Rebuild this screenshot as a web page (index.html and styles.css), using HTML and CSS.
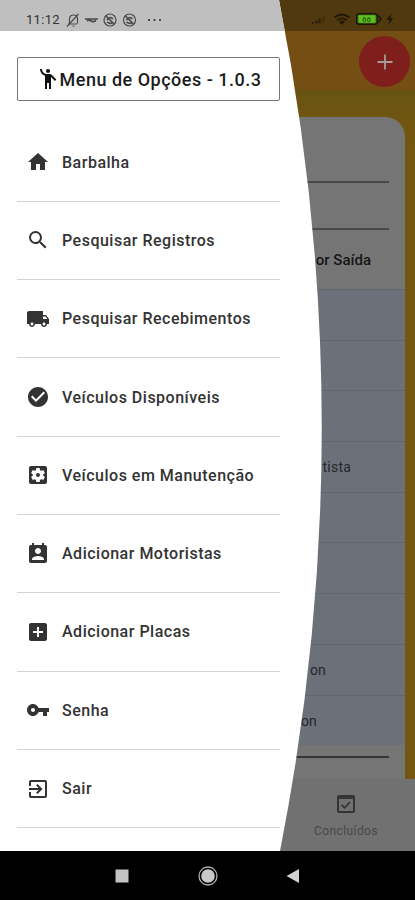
FILE: index.html
```
<!DOCTYPE html>
<html lang="pt-BR">
<head>
    <meta charset="UTF-8">
    <meta name="viewport" content="width=device-width, initial-scale=1.0">
    <title>Menu de Opções</title>
    <link rel="stylesheet" href="styles.css">
</head>
<body>
<div class="phone">
    <div class="app">
        <div class="app-status">
            <svg width="100" height="20" viewBox="0 0 100 20">
                <path d="M3 14.500h2v-1.500H3zM6.500 14.500h2v-3h-2zM9.500 14.500h2V9.500h-2z" fill="#2b1d08"/>
                <path d="M12.500 14.500V7.500l3-2v9z" fill="#46300e"/>
                <g fill="none" stroke="#231806" stroke-width="1.700">
                    <path d="M25.500 8.500q7.500-6 15 0M28 11.300q5-4 10 0"/>
                </g>
                <path d="M30 12.800q3-2.400 6 0l-3 3.200z" fill="#231806"/>
                <rect x="47.700" y="4.700" width="20.500" height="10.600" rx="2.500" fill="#386c14" stroke="#1e1707" stroke-width="1.400"/>
                <rect x="49.500" y="6.300" width="17" height="7.400" rx="1" fill="#61bd20"/>
                <path d="M69 6.500l3 3.500-3 3.500" fill="none" stroke="#1e1707" stroke-width="1.500"/>
                <text x="53" y="13" class="battery-text">66</text>
                <path d="M82.500 4.500l-5 6.300h3l-1 4.700 4.700-6.300h-3z" fill="#1e1707"/>
            </svg>
        </div>
        <div class="app-header">
            <button class="add-btn">
                <svg width="24" height="24" viewBox="0 0 24 24"><path d="M12 4.500v15M4.500 12h15" stroke="#a69a9a" stroke-width="1.800"/></svg>
            </button>
        </div>
        <div class="content">
            <div class="card">
                <div class="field field-first"></div>
                <div class="field"></div>
                <div class="table-head">or Saída</div>
                <div class="table-row"></div>
                <div class="table-row"></div>
                <div class="table-row"></div>
                <div class="table-row name-long">tista</div>
                <div class="table-row"></div>
                <div class="table-row"></div>
                <div class="table-row"></div>
                <div class="table-row name-mid">on</div>
                <div class="table-row name-short">on</div>
                <div class="table-end"></div>
            </div>
        </div>
        <div class="tabs">
            <div class="tab">
                <svg width="24" height="24" viewBox="0 0 24 24" fill="#343434"><path d="M19 3H5c-1.110 0-2 .9-2 2v14c0 1.100.89 2 2 2h14c1.100 0 2-.9 2-2V5c0-1.100-.9-2-2-2zm0 16H5V7h14v12zM10.500 17l-3.500-3.500 1.200-1.200 2.300 2.300 5-5 1.200 1.200z"/></svg>
                <span>Concluídos</span>
            </div>
        </div>
    </div>

    <div class="drawer">
        <div class="drawer-status">
            <span>11:12</span>
            <svg width="100" height="20" viewBox="0 0 100 20" fill="none" stroke="#4b4b4b" stroke-width="1.200">
                <path d="M3 14h9M4.500 13.500V9q0-4 4-4t4 4v4.500M7.500 16h2M2 16.500L13.500 4"/>
                <path d="M20 9h13M22 11q2-1.500 4 0t5-.5" stroke-width="1.700"/>
                <circle cx="45" cy="10" r="6"/>
                <path d="M41 6l8 8M42 10q3-4 6-1M42 12q3 2 5 1" stroke-width="1.700"/>
                <circle cx="64.500" cy="10" r="6"/>
                <path d="M60.500 6l8 8M61.500 10q3-4 6-1M61.500 12q3 2 5 1" stroke-width="1.700"/>
                <path d="M83 10h2M88.500 10h2M94 10h2" stroke-width="2"/>
            </svg>
        </div>
        <div class="menu">
            <div class="menu-title">
                <svg width="24" height="24" viewBox="0 0 24 24" fill="#111"><circle cx="12" cy="4" r="2"/><path d="M15.890 8.110C15.500 7.720 14.830 7 13.530 7h-2.540C8.240 6.990 6 4.750 6 2H4c0 3.160 2.110 5.840 5 6.710V22h2v-6h2v6h2V10.050L18.950 14l1.410-1.410-4.470-4.480z"/></svg>
                <span>Menu de Opções - 1.0.3</span>
            </div>
            <div class="menu-item">
                <svg viewBox="0 0 24 24"><path d="M10 20v-6h4v6h5v-8h3L12 3 2 12h3v8z"/></svg>
                <span>Barbalha</span>
            </div>
            <div class="menu-item">
                <svg viewBox="0 0 24 24"><path d="M15.500 14h-.79l-.28-.27A6.471 6.471 0 0 0 16 9.500 6.500 6.500 0 1 0 9.500 16c1.610 0 3.090-.59 4.230-1.570l.27.28v.79l5 4.990L20.490 19l-4.990-5zm-6 0C7.010 14 5 11.990 5 9.500S7.010 5 9.500 5 14 7.010 14 9.500 11.990 14 9.500 14z"/></svg>
                <span>Pesquisar Registros</span>
            </div>
            <div class="menu-item">
                <svg viewBox="0 0 24 24"><path d="M20 8h-3V4H3c-1.100 0-2 .9-2 2v11h2c0 1.660 1.340 3 3 3s3-1.340 3-3h6c0 1.660 1.340 3 3 3s3-1.340 3-3h2v-5l-3-4zM6 18.500c-.83 0-1.500-.67-1.500-1.500s.67-1.500 1.500-1.500 1.500.67 1.500 1.500-.67 1.500-1.500 1.500zm13.500-9l1.960 2.500H17V9.500h2.500zm-1.500 9c-.83 0-1.500-.67-1.500-1.500s.67-1.500 1.500-1.500 1.500.67 1.500 1.500-.67 1.500-1.500 1.500z"/></svg>
                <span>Pesquisar Recebimentos</span>
            </div>
            <div class="menu-item">
                <svg viewBox="0 0 24 24"><path d="M12 2C6.480 2 2 6.480 2 12s4.480 10 10 10 10-4.480 10-10S17.520 2 12 2zm-2 15l-5-5 1.410-1.410L10 14.170l7.590-7.590L19 8l-9 9z"/></svg>
                <span>Veículos Disponíveis</span>
            </div>
            <div class="menu-item">
                <svg viewBox="0 0 24 24"><path d="M12 10c-1.100 0-2 .9-2 2s.9 2 2 2 2-.9 2-2-.9-2-2-2zm7-7H5c-1.110 0-2 .9-2 2v14c0 1.100.89 2 2 2h14c1.110 0 2-.9 2-2V5c0-1.100-.89-2-2-2zm-1.750 9c0 .23-.02.46-.05.68l1.480 1.160c.13.110.17.3.08.45l-1.400 2.420c-.09.150-.27.210-.43.150l-1.740-.7c-.36.280-.76.510-1.180.69l-.26 1.850c-.03.170-.18.300-.35.300h-2.800c-.17 0-.32-.13-.35-.29l-.26-1.850c-.43-.18-.82-.41-1.180-.69l-1.740.7c-.16.060-.34 0-.43-.15l-1.400-2.420c-.09-.15-.05-.34.080-.45l1.480-1.160c-.03-.23-.05-.46-.05-.69s.02-.46.050-.68l-1.480-1.160c-.13-.11-.17-.3-.08-.45l1.400-2.420c.09-.15.270-.21.430-.15l1.740.7c.36-.28.760-.51 1.180-.69l.26-1.850c.03-.17.180-.3.350-.3h2.800c.17 0 .32.130.35.290l.26 1.850c.43.180.82.410 1.180.69l1.740-.7c.16-.06.340 0 .43.150l1.400 2.420c.09.150.05.340-.08.450l-1.480 1.160c.03.230.05.460.05.690z"/></svg>
                <span>Veículos em Manutenção</span>
            </div>
            <div class="menu-item">
                <svg viewBox="0 0 24 24"><path d="M19 3h-1V1h-2v2H8V1H6v2H5c-1.110 0-2 .9-2 2v14c0 1.100.89 2 2 2h14c1.100 0 2-.9 2-2V5c0-1.100-.9-2-2-2zm-7 3c1.660 0 3 1.340 3 3s-1.340 3-3 3-3-1.340-3-3 1.340-3 3-3zm6 12H6v-1c0-2 4-3.100 6-3.100s6 1.100 6 3.100v1z"/></svg>
                <span>Adicionar Motoristas</span>
            </div>
            <div class="menu-item">
                <svg viewBox="0 0 24 24"><path d="M19 3H5c-1.110 0-2 .9-2 2v14c0 1.100.89 2 2 2h14c1.100 0 2-.9 2-2V5c0-1.100-.9-2-2-2zm-2 10h-4v4h-2v-4H7v-2h4V7h2v4h4v2z"/></svg>
                <span>Adicionar Placas</span>
            </div>
            <div class="menu-item">
                <svg viewBox="0 0 24 24"><path d="M12.650 10C11.830 7.670 9.610 6 7 6c-3.310 0-6 2.690-6 6s2.690 6 6 6c2.610 0 4.830-1.670 5.650-4H17v4h4v-4h2v-4H12.650zM7 14c-1.100 0-2-.9-2-2s.9-2 2-2 2 .9 2 2-.9 2-2 2z"/></svg>
                <span>Senha</span>
            </div>
            <div class="menu-item">
                <svg viewBox="0 0 24 24"><path d="M10.090 15.590L11.500 17l5-5-5-5-1.410 1.410L12.670 11H3v2h9.670l-2.580 2.590zM19 3H5c-1.110 0-2 .9-2 2v4h2V5h14v14H5v-4H3v4c0 1.100.89 2 2 2h14c1.100 0 2-.9 2-2V5c0-1.100-.9-2-2-2z"/></svg>
                <span>Sair</span>
            </div>
        </div>
    </div>

    <div class="nav-bar">
        <svg width="20" height="20" viewBox="0 0 20 20"><rect x="3.500" y="3.500" width="13" height="13" fill="#c4c4c4"/></svg>
        <svg width="20" height="20" viewBox="0 0 20 20"><circle cx="10" cy="10" r="6.800" fill="#c8c8c8"/><circle cx="10" cy="10" r="9" fill="none" stroke="#b0b0b0" stroke-width="1.300"/></svg>
        <svg width="20" height="20" viewBox="0 0 20 20"><path d="M2.500 10L15 3v14z" fill="#d2d2d2"/></svg>
    </div>
</div>
</body>
</html>
```
FILE: styles.css
```
* {
    box-sizing: border-box;
}
body {
    margin: 0;
    font-family: Roboto, "Liberation Sans", sans-serif;
}
.phone {
    position: relative;
    display: flex;
    flex-direction: column;
    width: 415px;
    height: 900px;
    overflow: hidden;
    background: #000;
}

/* page behind the drawer, already dimmed */
.app {
    display: flex;
    flex-direction: column;
    height: 851px;
    background: #735611;
}
.app-status {
    display: flex;
    justify-content: flex-end;
    height: 31px;
    padding: 9px 4px 0 0;
    background: #50380f;
}
.app-status svg {
    margin-right: 2px;
}
.battery-text {
    font-size: 8px;
    font-weight: bold;
    fill: #2f6a12;
}
.app-header {
    display: flex;
    justify-content: flex-end;
    height: 59px;
    padding: 5px 5px 0 0;
    background: #744e12;
}
.add-btn {
    display: flex;
    align-items: center;
    justify-content: center;
    width: 51px;
    height: 51px;
    padding: 0;
    border: 0;
    border-radius: 50%;
    background: #7e1f1c;
}
.content {
    height: 689px;
    padding: 27px 10px 0;
    background: linear-gradient(#664e10, #6b5511 6px, #735611 60px);
}
.card {
    height: 662px;
    padding-top: 16px;
    border-radius: 20px 20px 0 0;
    background: #757575;
}
.field {
    height: 47px;
    margin: 0 16px;
    border-bottom: 2px solid #484848;
}
.field-first {
    height: 50px;
}
.table-head {
    height: 59px;
    padding-right: 34px;
    line-height: 61px;
    font-size: 15px;
    font-weight: 500;
    text-align: right;
    color: #151515;
}
.table-row {
    height: 50.700px;
    border-top: 1px solid #62656b;
    background: #6c7079;
    line-height: 50px;
    font-size: 14px;
    letter-spacing: 0.200px;
    text-align: right;
    color: #25282d;
}
.name-long {
    padding-right: 54px;
}
.name-mid {
    padding-right: 79px;
}
.name-short {
    padding-right: 88px;
}
.table-end {
    height: 13px;
    margin: 0 16px;
    border-bottom: 2px solid #353535;
}
.tabs {
    display: flex;
    justify-content: flex-end;
    height: 72px;
    background: #717171;
}
.tab {
    display: flex;
    flex-direction: column;
    align-items: center;
    width: 138px;
    padding-top: 13px;
    font-size: 12px;
    letter-spacing: 0.400px;
    color: #484848;
}
.tab span {
    margin-top: 8px;
}

/* drawer with the curved right edge */
.drawer {
    position: absolute;
    top: 0;
    left: 0;
    width: 330px;
    height: 851px;
    background: #fff;
    clip-path: path("M0 0H279Q364 425 280 851H0Z");
}
.drawer-status {
    display: flex;
    align-items: center;
    height: 31px;
    padding: 8px 0 0 26px;
    background: #bfbfbf;
    font-size: 13px;
    letter-spacing: 0.300px;
    color: #333;
}
.drawer-status svg {
    margin-left: 5px;
}
.menu {
    width: 263px;
    margin: 26px 0 0 17px;
}
.menu-title {
    display: flex;
    align-items: center;
    height: 44px;
    margin-bottom: 22.500px;
    padding-left: 17.500px;
    border: 1px solid #777;
    border-radius: 2px;
    font-size: 18px;
    font-weight: 500;
    letter-spacing: 0.500px;
    color: #1c1c1c;
    white-space: nowrap;
}
.menu-item {
    display: flex;
    align-items: center;
    height: 78.300px;
    padding-left: 9px;
    border-bottom: 1px solid #d4d4d4;
    font-size: 16px;
    font-weight: 500;
    letter-spacing: 0.500px;
    color: #333;
}
.menu-item svg {
    width: 24px;
    height: 24px;
    margin-right: 12px;
    fill: #333;
}

/* android buttons */
.nav-bar {
    display: flex;
    align-items: center;
    gap: 66px;
    height: 49px;
    padding-left: 112px;
    background: #000;
}
```
